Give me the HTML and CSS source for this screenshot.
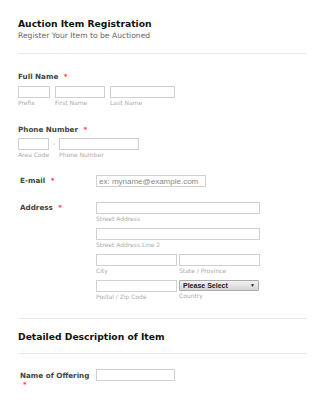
FILE: index.html
```html
<!DOCTYPE html>
<html lang="en">
<head>
  <meta charset="UTF-8">
  <meta name="viewport" content="width=device-width, initial-scale=1.0">
  <title>Auction Item Registration</title>
  <link rel="stylesheet" href="styles.css">
</head>
<body>
  <div class="form">
    <div class="form-header">
      <h1 class="title">Auction Item Registration</h1>
      <div class="subtitle">Register Your Item to be Auctioned</div>
    </div>

    <div class="field field-top">
      <div class="label">Full Name <span class="req">*</span></div>
      <div class="inputs">
        <div class="sub">
          <input type="text" class="input w-prefix">
          <span class="sub-label">Prefix</span>
        </div>
        <div class="sub">
          <input type="text" class="input w-first">
          <span class="sub-label">First Name</span>
        </div>
        <div class="sub">
          <input type="text" class="input w-last">
          <span class="sub-label">Last Name</span>
        </div>
      </div>
    </div>

    <div class="field field-top phone">
      <div class="label">Phone Number <span class="req">*</span></div>
      <div class="inputs">
        <div class="sub">
          <input type="text" class="input w-area">
          <span class="sub-label">Area Code</span>
        </div>
        <span class="dash">-</span>
        <div class="sub">
          <input type="text" class="input w-phone">
          <span class="sub-label">Phone Number</span>
        </div>
      </div>
    </div>

    <div class="field field-left email">
      <div class="label">E-mail <span class="req">*</span></div>
      <input type="text" class="input w-email" placeholder="ex: myname@example.com">
    </div>

    <div class="field field-left address">
      <div class="label">Address <span class="req">*</span></div>
      <div class="addr-grid">
        <div class="sub full">
          <input type="text" class="input">
          <span class="sub-label">Street Address</span>
        </div>
        <div class="sub full">
          <input type="text" class="input">
          <span class="sub-label">Street Address Line 2</span>
        </div>
        <div class="sub">
          <input type="text" class="input">
          <span class="sub-label">City</span>
        </div>
        <div class="sub">
          <input type="text" class="input">
          <span class="sub-label">State / Province</span>
        </div>
        <div class="sub">
          <input type="text" class="input">
          <span class="sub-label">Postal / Zip Code</span>
        </div>
        <div class="sub">
          <div class="select">Please Select <span class="arrow">&#9660;</span></div>
          <span class="sub-label">Country</span>
        </div>
      </div>
    </div>

    <div class="section-head">
      <h2 class="section-title">Detailed Description of Item</h2>
    </div>

    <div class="field field-left offering">
      <div class="label">Name of Offering <span class="req">*</span></div>
      <input type="text" class="input w-offer">
    </div>
  </div>
</body>
</html>
```

FILE: styles.css
```css
* {
  box-sizing: border-box;
  margin: 0;
  padding: 0;
}

body {
  font-family: 'DejaVu Sans', Verdana, sans-serif;
  color: #333;
  background-color: #fff;
}

.form {
  width: 307px;
  padding-left: 18px;
}

.form-header {
  padding-top: 18px;
  height: 54px;
  border-bottom: 1px solid #e9e9e9;
}

.title {
  font-size: 9.2px;
  font-weight: bold;
  line-height: 12px;
  color: #111;
}

.subtitle {
  font-size: 7.6px;
  line-height: 10px;
  color: #666;
  margin-top: 1px;
}

.field {
  display: flex;
}

.field-top {
  flex-direction: column;
  margin-top: 18px;
}

.field-top .label {
  line-height: 10px;
  margin-bottom: 4px;
}

.label {
  font-size: 7.2px;
  font-weight: bold;
  color: #444;
}

.req {
  color: #f33;
  margin-left: 3px;
}

.inputs {
  display: flex;
  gap: 5px;
}

.sub {
  display: flex;
  flex-direction: column;
}

.input {
  display: block;
  height: 12px;
  border: 1px solid #d0d0d0;
  background: #fff;
  outline: none;
  font-family: 'Liberation Sans', Arial, sans-serif;
  font-size: 8px;
  padding: 0 2px;
}

.input::placeholder {
  color: #888;
}

.sub-label {
  font-size: 6px;
  line-height: 9px;
  color: #aaa;
}

.w-prefix { width: 32px; }
.w-first { width: 50px; }
.w-last { width: 65px; }
.w-area { width: 31px; }
.w-phone { width: 80px; }
.w-email { width: 110px; }
.w-offer { width: 79px; }

.phone {
  margin-top: 18px;
}

.phone .label {
  margin-bottom: 3px;
}

.phone .inputs {
  gap: 0;
}

.dash {
  font-size: 7px;
  color: #999;
  width: 10px;
  text-align: center;
  line-height: 12px;
}

.field-left .label {
  width: 78px;
  flex-shrink: 0;
  padding-left: 2px;
  padding-right: 2px;
  line-height: 10px;
  padding-top: 1px;
}

.email {
  margin-top: 16px;
}

.address {
  margin-top: 15px;
}

.addr-grid {
  display: grid;
  grid-template-columns: 81px 81px;
  column-gap: 2px;
  row-gap: 5px;
}

.addr-grid .full {
  grid-column: 1 / 3;
}

.addr-grid .input {
  width: 100%;
}

.select {
  height: 11px;
  width: 80px;
  border: 1px solid #aaa;
  border-radius: 1px;
  background: linear-gradient(#f2f2f2, #d6d6d6);
  font-family: 'Liberation Sans', Arial, sans-serif;
  font-size: 7px;
  font-weight: bold;
  line-height: 9px;
  color: #222;
  padding-left: 3px;
  position: relative;
}

.arrow {
  position: absolute;
  right: 3px;
  top: 0;
  font-size: 5px;
}

.section-head {
  margin-top: 17px;
  border-top: 1px solid #e9e9e9;
  border-bottom: 1px solid #e9e9e9;
  height: 36px;
  padding-top: 12px;
}

.section-title {
  font-size: 9.2px;
  font-weight: bold;
  line-height: 12px;
  color: #111;
}

.offering {
  margin-top: 15px;
}

.offering .label {
  line-height: 9px;
  padding-top: 2px;
}
```
